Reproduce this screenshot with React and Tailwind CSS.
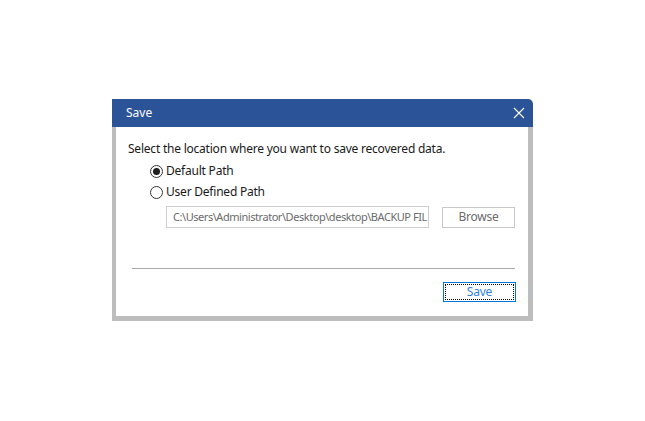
export default function App() {
    return (
        <div className="w-[645px] h-[421px] bg-white pt-[99px] pl-[112px]" style={{fontFamily: '"Noto Sans", sans-serif'}}>
            <div className="w-[421px] rounded-tr-[5px] overflow-hidden">
                <div className="h-[28px] bg-[#2b5398] flex items-center justify-between pl-[14px] pr-[8px] text-white text-[12px]">
                    <span>Save</span>
                    <svg width="12" height="12" viewBox="0 0 12 12" stroke="white" strokeWidth="1.1" fill="none">
                        <path d="M1 1 L11 11 M11 1 L1 11"/>
                    </svg>
                </div>

                <div className="bg-[#bdbdbd] pl-[4px] pr-[5px] pb-[5px]">
                    <div className="bg-white h-[189px] flex flex-col text-[12px] tracking-[-0.22px] text-[#1a1a1a]">
                        <div className="pl-[12px] pt-[14px] leading-[16px]">
                            Select the location where you want to save recovered data.
                        </div>

                        <div className="pl-[34px] mt-[6px] flex flex-col gap-[5px]">
                            <div className="flex items-center h-[16px] gap-[3px]">
                                <div className="w-[13px] h-[13px] rounded-full border border-[#333] flex items-center justify-center">
                                    <div className="w-[7px] h-[7px] rounded-full bg-[#1f1f1f]"/>
                                </div>
                                <span>Default Path</span>
                            </div>
                            <div className="flex items-center h-[16px] gap-[3px]">
                                <div className="w-[13px] h-[13px] rounded-full border border-[#333]"/>
                                <span>User Defined Path</span>
                            </div>
                        </div>

                        <div className="flex items-center mt-[6px] pl-[50px]">
                            <div className="w-[263px] shrink-0 h-[22px] border border-[#cfcfcf] flex items-center pl-[6px] text-[11px] tracking-[-0.45px] text-[#6b6b6b] whitespace-nowrap overflow-hidden">
                                C:\Users\Administrator\Desktop\desktop\BACKUP FIL
                            </div>
                            <button className="ml-[13px] shrink-0 w-[73px] h-[21px] border border-[#c8c8c8] text-[#6b6b6b] flex items-center justify-center">
                                Browse
                            </button>
                        </div>

                        <div className="mt-[40px] ml-[16px] mr-[13px] border-t border-[#a8a8a8]"/>

                        <div className="flex justify-end pr-[12px] mt-[13px]">
                            <button className="w-[73px] h-[20px] border border-[#0078d7] p-[1px]">
                                <div className="w-full h-full border border-dotted border-black flex items-center justify-center text-[#2f7fe0]">
                                    Save
                                </div>
                            </button>
                        </div>
                    </div>
                </div>
            </div>
        </div>
    );
}
